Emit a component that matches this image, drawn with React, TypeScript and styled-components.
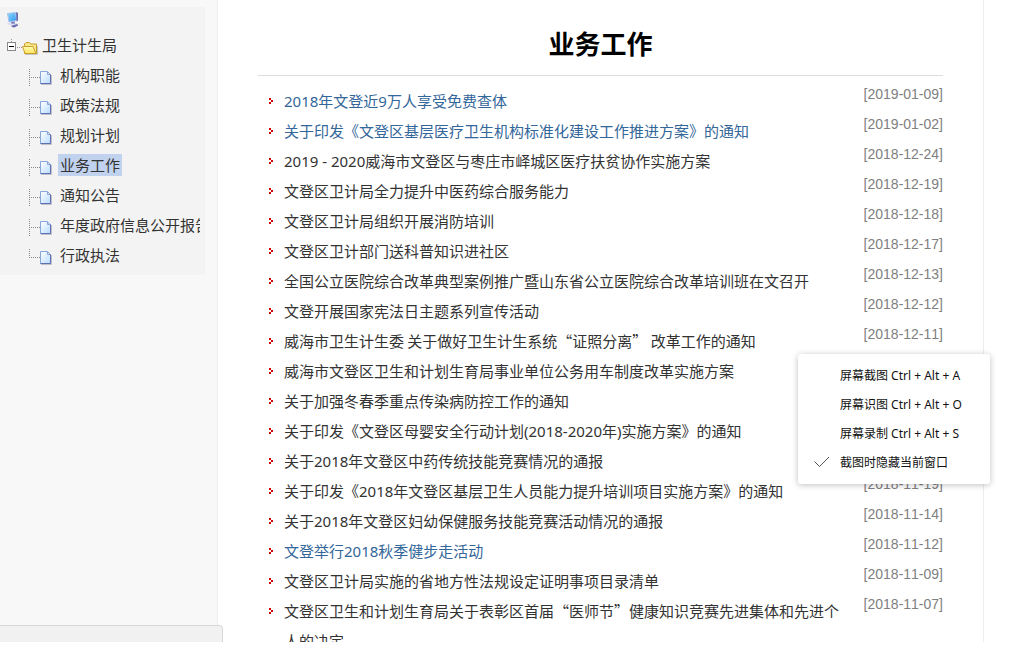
import React from "react";
import styled, { createGlobalStyle, css } from "styled-components";

const GlobalStyle = createGlobalStyle`
  *, *::before, *::after { box-sizing: border-box; }
  body {
    margin: 0;
    background: #fff;
    color: #333;
    font-family: "Noto Sans", "Noto Sans CJK SC", sans-serif;
    font-size: 15px;
  }
  ul { list-style: none; margin: 0; padding: 0; }
`;

const Page = styled.div`
  position: relative;
  display: flex;
  height: calc(100vh - 16px);
  padding-right: 50px;
  overflow: hidden;
`;

const Sidebar = styled.aside`
  flex: 0 0 218px;
  min-width: 0;
  padding: 7px 12px 0 0;
  background: #f8f8f8;
  border-right: 1px solid #eee;
`;

const Tree = styled.nav`
  padding: 4px 5px 4px 6px;
  background: #f3f3f3;
`;

const TreeTop = styled.div`
  height: 20px;
  svg { display: block; }
`;

const TreeRow = styled.div<{ $child?: boolean }>`
  display: flex;
  align-items: center;
  height: 30px;
  padding-left: ${(p) => (p.$child ? 22 : 0)}px;
  overflow: hidden;
  svg { flex: none; }
`;

const TreeLink = styled.a<{ $child?: boolean; $active?: boolean }>`
  margin: 0 0 2px ${(p) => (p.$child ? 2 : 0)}px;
  padding: 0 2px;
  line-height: 22px;
  color: #333;
  white-space: nowrap;
  text-decoration: none;
  ${(p) => p.$active && css`background: #c1d2ee;`}
`;

const Main = styled.main`
  flex: 1;
  min-width: 0;
  padding: 14px 40px 0;
  border-right: 1px solid #eee;
`;

const Title = styled.h1`
  margin: 0 0 10px;
  border-bottom: 1px solid #ddd;
  color: #000;
  font-size: 26px;
  font-weight: 700;
  line-height: 61px;
  text-align: center;
`;

const NewsRow = styled.li`
  display: flex;
  align-items: flex-start;
`;

const Bullet = styled.svg`
  flex: none;
  width: 4px;
  height: 6px;
  margin: 12px 11px 0;
`;

/* $wideQuotes: Chinese quotation marks take a full-width cell from the CJK face. */
const NewsLink = styled.a<{ $visited?: boolean; $wideQuotes?: boolean }>`
  flex: 1;
  color: ${(p) => (p.$visited ? "#336699" : "#333")};
  line-height: 30px;
  text-decoration: none;
  ${(p) => p.$wideQuotes && css`font-family: "Noto Sans CJK SC", sans-serif;`}
`;

const DateText = styled.time`
  flex: none;
  margin-left: 16px;
  color: #808080;
  font-family: "Liberation Sans", sans-serif;
  font-size: 14px;
  font-kerning: none;
  line-height: 16px;
`;

const StatusBar = styled.div`
  position: absolute;
  left: 0;
  bottom: 0;
  width: 223px;
  height: 17px;
  background: #f1f1f1;
  border: solid #d8d8d8;
  border-width: 1px 1px 0 0;
  border-top-right-radius: 4px;
`;

const Menu = styled.div`
  position: absolute;
  top: 354px;
  right: 44px;
  width: 192px;
  padding: 6px 0 8px;
  background: #fff;
  border-radius: 3px;
  box-shadow: 0 1px 6px rgba(0, 0, 0, 0.25);
`;

const MenuItem = styled.button`
  display: flex;
  align-items: center;
  width: 100%;
  height: 29px;
  padding: 0 0 0 16px;
  border: 0;
  background: none;
  color: #111;
  font-family: "Noto Sans", "Noto Sans CJK SC", sans-serif;
  font-size: 12px;
  white-space: nowrap;
`;

const MenuMark = styled.span`
  display: flex;
  flex: 0 0 26px;
`;

const ComputerIcon = () => (
  <svg width="14" height="18" viewBox="0 0 14 18" aria-hidden="true">
    <defs>
      <linearGradient id="screen" x1="0" y1="0" x2="1" y2="1">
        <stop offset="0" stopColor="#8fd8ff" />
        <stop offset="1" stopColor="#2b96ee" />
      </linearGradient>
    </defs>
    <path d="M1.500 2.500 L9.500 1.500 L10.500 9.500 L3 11 Z" fill="url(#screen)" stroke="#a9c4e8" />
    <path d="M10 1 L12 2 L12 9.500 L10.500 10.500 Z" fill="#6668b0" />
    <path d="M5 11 L9 10.500 L9 13 L5 13 Z" fill="#8284bd" />
    <path d="M1 12 L5 11.500 L6 13 L11 12 L12 14 L8 16 L2 13.500 Z" fill="#dcdcf2" />
    <path d="M6 14.500 L11.500 13 L12 14.500 L8.500 16.500 L5.500 16 Z" fill="#6c6eb0" />
  </svg>
);

const RootIcon = () => (
  <svg width="34" height="30" viewBox="0 0 34 30" aria-hidden="true">
    <defs>
      <linearGradient id="folder" x1="0" y1="0" x2="0" y2="1">
        <stop offset="0" stopColor="#fffbb8" />
        <stop offset="1" stopColor="#ffe65a" />
      </linearGradient>
    </defs>
    <path d="M5.500 8 V12 M11 16.500 H16" stroke="#999" strokeDasharray="1 1" />
    <rect x="1.500" y="11.500" width="8" height="8" fill="#fff" stroke="#888" />
    <path d="M3 15.500 H8" stroke="#000" />
    <path d="M19 23.500 H31.500 V15" stroke="#c4c4c4" fill="none" />
    <path d="M18.500 22.500 V13 L20 11.500 H23.500 L25 13 H30.500 V22.500 Z" fill="#f9e58a" stroke="#c99f2e" />
    <path d="M16.500 15.500 H27 L30 22.500 H19 Z" fill="url(#folder)" stroke="#c99f2e" />
  </svg>
);

const LeafIcon = ({ last }: { last?: boolean }) => (
  <svg width="28" height="30" viewBox="0 0 28 30" aria-hidden="true">
    <defs>
      <linearGradient id="sheet" x1="0" y1="0" x2="1" y2="1">
        <stop offset="0" stopColor="#ffffff" />
        <stop offset="1" stopColor="#b9dcff" />
      </linearGradient>
    </defs>
    <path d={last ? "M1.500 8 V17" : "M1.500 8 V25"} stroke="#888" strokeDasharray="1 1" />
    <path d="M3 16.500 H12" stroke="#888" strokeDasharray="1 1" />
    <path d="M13 23.500 H23.500 V14" stroke="#c0c0c8" fill="none" />
    <path d="M12.500 10.500 H19.500 L22.500 13.500 V22.500 H12.500 Z" fill="url(#sheet)" stroke="#86a6dc" />
    <path d="M22.500 13.500 V22.500 H12.500" stroke="#6070b4" fill="none" />
    <path d="M19.500 11 V13.500 H22" fill="#cfe0f8" stroke="#8fa4d6" />
  </svg>
);

const sections = ["机构职能", "政策法规", "规划计划", "业务工作", "通知公告", "年度政府信息公开报告", "行政执法"];

const news: { title: string; date: string; visited?: boolean }[] = [
  { title: "2018年文登近9万人享受免费查体", date: "2019-01-09", visited: true },
  { title: "关于印发《文登区基层医疗卫生机构标准化建设工作推进方案》的通知", date: "2019-01-02", visited: true },
  { title: "2019 - 2020威海市文登区与枣庄市峄城区医疗扶贫协作实施方案", date: "2018-12-24" },
  { title: "文登区卫计局全力提升中医药综合服务能力", date: "2018-12-19" },
  { title: "文登区卫计局组织开展消防培训", date: "2018-12-18" },
  { title: "文登区卫计部门送科普知识进社区", date: "2018-12-17" },
  { title: "全国公立医院综合改革典型案例推广暨山东省公立医院综合改革培训班在文召开", date: "2018-12-13" },
  { title: "文登开展国家宪法日主题系列宣传活动", date: "2018-12-12" },
  { title: "威海市卫生计生委 关于做好卫生计生系统“证照分离” 改革工作的通知", date: "2018-12-11" },
  { title: "威海市文登区卫生和计划生育局事业单位公务用车制度改革实施方案", date: "2018-12-07" },
  { title: "关于加强冬春季重点传染病防控工作的通知", date: "2018-12-05" },
  { title: "关于印发《文登区母婴安全行动计划(2018-2020年)实施方案》的通知", date: "2018-11-28" },
  { title: "关于2018年文登区中药传统技能竞赛情况的通报", date: "2018-11-21" },
  { title: "关于印发《2018年文登区基层卫生人员能力提升培训项目实施方案》的通知", date: "2018-11-19" },
  { title: "关于2018年文登区妇幼保健服务技能竞赛活动情况的通报", date: "2018-11-14" },
  { title: "文登举行2018秋季健步走活动", date: "2018-11-12", visited: true },
  { title: "文登区卫计局实施的省地方性法规设定证明事项目录清单", date: "2018-11-09" },
  { title: "文登区卫生和计划生育局关于表彰区首届“医师节”健康知识竞赛先进集体和先进个人的决定", date: "2018-11-07" },
];

const menuItems = [
  { label: "屏幕截图 Ctrl + Alt + A" },
  { label: "屏幕识图 Ctrl + Alt + O" },
  { label: "屏幕录制 Ctrl + Alt + S" },
  { label: "截图时隐藏当前窗口", checked: true },
];

export default function App() {
  return (
    <>
      <GlobalStyle />
      <Page lang="zh-CN">
        <Sidebar>
          <Tree>
            <TreeTop><ComputerIcon /></TreeTop>
            <TreeRow>
              <RootIcon />
              <TreeLink href="#root">卫生计生局</TreeLink>
            </TreeRow>
            <ul>
              {sections.map((name, i) => (
                <li key={name}>
                  <TreeRow $child>
                    <LeafIcon last={i === sections.length - 1} />
                    <TreeLink href={`#section-${i}`} $child $active={name === "业务工作"}>{name}</TreeLink>
                  </TreeRow>
                </li>
              ))}
            </ul>
          </Tree>
        </Sidebar>
        <Main>
          <Title>业务工作</Title>
          <ul>
            {news.map((n, i) => (
              <NewsRow key={i}>
                <Bullet viewBox="0 0 4 6" shapeRendering="crispEdges" aria-hidden="true">
                  <path d="M0 0h2v2h-2z M2 2h2v2h-2z M0 4h2v2h-2z" fill="#c00" />
                </Bullet>
                <NewsLink href={`#news-${i}`} $visited={n.visited} $wideQuotes={n.title.includes("“")}>
                  {n.title}
                </NewsLink>
                <DateText dateTime={n.date}>{`[${n.date}]`}</DateText>
              </NewsRow>
            ))}
          </ul>
        </Main>
        <StatusBar />
        <Menu role="menu">
          {menuItems.map((m) => (
            <MenuItem key={m.label} type="button" role="menuitem">
              <MenuMark>
                {m.checked && (
                  <svg width="16" height="12" viewBox="0 0 16 12" fill="none" stroke="#555" aria-hidden="true">
                    <path d="M0.500 5.500 L5.500 10.500 L15 1" />
                  </svg>
                )}
              </MenuMark>
              {m.label}
            </MenuItem>
          ))}
        </Menu>
      </Page>
    </>
  );
}
